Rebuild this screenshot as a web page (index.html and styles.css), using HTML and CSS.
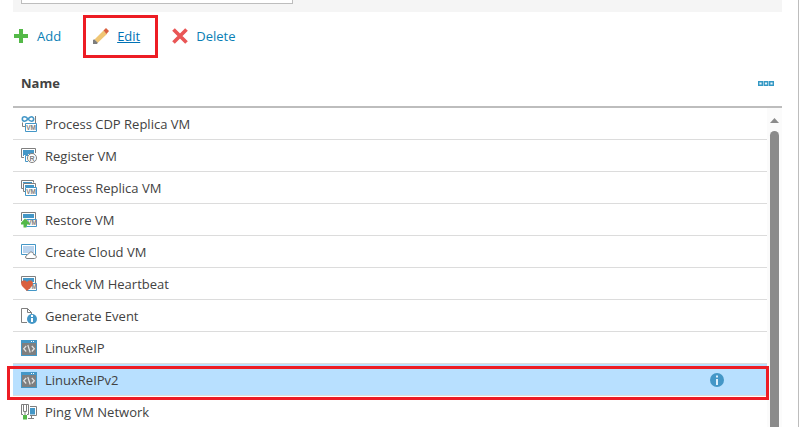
FILE: index.html
```html
<!DOCTYPE html>
<html lang="en">
<head>
<meta charset="utf-8">
<title>Plan Steps</title>
<link rel="stylesheet" href="styles.css">
</head>
<body>
<div class="page">
  <div class="filter"><div class="search"></div></div>
  <div class="toolbar">
    <a class="tool add"><svg width="14" height="14" viewBox="0 0 14 14"><path fill="#54b948" d="M5 0h4v5h5v4H9v5H5V9H0V5h5z"/></svg><span>Add</span></a>
    <a class="tool edit"><svg width="16" height="16" viewBox="0 0 16 16"><path fill="#f0c674" d="M1.500 11.500l9-9 3.500 3.500L4.500 15z"/><path fill="#d9603f" d="M10.500 2.500L13 0l3 3-2.500 3z"/><path fill="#7d7d7d" d="M0 16v-4l1.200-.8 3.600 3.600-.8 1.200z"/></svg><span>Edit</span></a>
    <a class="tool delete"><svg width="16" height="16" viewBox="0 0 16 16"><path d="M1.500 1.500l13 13M14.500 1.500l-13 13" stroke="#e95656" stroke-width="3.700"/></svg><span>Delete</span></a>
  </div>
  <div class="head"><span>Name</span><svg width="16" height="5" viewBox="0 0 16 5" fill="#e8f5fa" stroke="#3498c4" stroke-width="1.400"><path d="M.7.7h3.600v3.600H.7zM6.200.7h3.600v3.600H6.200zM11.700.7h3.600v3.600h-3.600z"/></svg></div>
  <div class="body">
    <div class="rows">
      <div class="row">
        <svg class="ico" viewBox="0 0 16 16" fill="none"><path d="M1.500 6.500v4H4M14.500 0v7" stroke="#7f7f7f"/><path d="M7 3C5.500 1.200 4.700.8 3.500.8a2.200 2.200 0 0 0 0 4.400C5 5.200 6 4 7 3s2-2.200 3.500-2.200a2.200 2.200 0 0 1 0 4.400C9 5.200 8 4.200 7 3z" stroke="#4497c7" stroke-width="1.600"/><path d="M4.500 7.500h11v8h-11z" fill="#fff" stroke="#4497c7"/><text x="10" y="14" class="vm">VM</text></svg>
        <span>Process CDP Replica VM</span></div>
      <div class="row">
        <svg class="ico" viewBox="0 0 16 16" fill="none"><path d="M3 9.500H.5v-9h14V5" stroke="#7f7f7f"/><path d="M2 2h11v4H7v1H3v1H2z" fill="#4497c7"/><path d="M7 13.500H4.500v-6H8" stroke="#4497c7"/><circle cx="11" cy="10" r="4.500" fill="#fff" stroke="#7f7f7f"/><text x="11" y="12.600" class="reg">R</text></svg>
        <span>Register VM</span></div>
      <div class="row">
        <svg class="ico" viewBox="0 0 16 16" fill="none"><path d="M2.500 8.500h-2v-8h12v2M4.500 11.500h-2v-8h12v4" stroke="#7f7f7f"/><path d="M2 2h9v1H2zM4 5h9v2H4z" fill="#4497c7"/><path d="M4.500 7.500h11v8h-11z" fill="#fff" stroke="#4497c7"/><text x="10" y="14" class="vm">VM</text></svg>
        <span>Process Replica VM</span></div>
      <div class="row">
        <svg class="ico" viewBox="0 0 16 16" fill="none"><path d="M.5 9V.5h14V7" stroke="#7f7f7f"/><path d="M2 2h11v4H2z" fill="#4497c7"/><path d="M5.500 7.500h10v7h-10z" fill="#fff" stroke="#4497c7"/><text x="11" y="13.200" class="vm">VM</text><path d="M4 6.500L8.500 11v1.500H5.500V15.500h-3v-3H-.2V11z" fill="#54b948"/></svg>
        <span>Restore VM</span></div>
      <div class="row">
        <svg class="ico" viewBox="0 0 16 16" fill="none"><path d="M.5.5h14v10H.5z" fill="#fff" stroke="#4497c7"/><path d="M2 2h11v7H2z" fill="#b9d3ee"/><path d="M6 14.500c-2 0-2-2.700-.1-3 .1-1.200 1-1.600 1.800-1.500.8-3 4.600-2.600 5 .7 3.300-.1 3.300 3.800.8 3.800z" fill="#fff" stroke="#7f7f7f"/></svg>
        <span>Create Cloud VM</span></div>
      <div class="row">
        <svg class="ico" viewBox="0 0 16 16" fill="none"><path d="M.5 7V.5h14V8" stroke="#7f7f7f"/><path d="M2 2h11v4H2z" fill="#4497c7"/><path d="M5.500 7.500h10v7h-10z" fill="#fff" stroke="#4497c7"/><text x="11" y="13.200" class="vm">VM</text><path d="M6 15L1 10C-.5 8-.2 4.800 2.500 4.500 4.400 4.300 5.500 5 6 6c.7-1 1.800-1.700 3.600-1.500 2.600.4 2.900 3.500 1.400 5.500z" fill="#d9603f"/></svg>
        <span>Check VM Heartbeat</span></div>
      <div class="row">
        <svg class="ico" viewBox="0 0 16 16" fill="none"><path d="M6 14.500H.5V.5h6l4 4V6M6.500.5v4h4" stroke="#7f7f7f"/><circle cx="11" cy="11" r="5" fill="#4497c7"/><path d="M10 7h2v2h-2zM10 10h2v4h-2z" fill="#fff"/></svg>
        <span>Generate Event</span></div>
      <div class="row">
        <svg class="ico" viewBox="0 0 16 16" fill="none"><path d="M0 0h16v16H0z" fill="#4497c7"/><path d="M1 3h14v12H1z" fill="#7f7f7f"/><path d="M10 1h1v1h-1zM12 1h1v1h-1z" fill="#fff"/><path d="M5.200 6L2.700 8.700l2.500 2.800M10.800 6l2.500 2.700-2.500 2.800M6.800 5l2.400 7.500" stroke="#e4e4e4" stroke-width="1.200"/></svg>
        <span>LinuxReIP</span></div>
      <div class="row selected">
        <svg class="ico" viewBox="0 0 16 16" fill="none"><path d="M0 0h16v16H0z" fill="#4497c7"/><path d="M1 3h14v12H1z" fill="#7f7f7f"/><path d="M10 1h1v1h-1zM12 1h1v1h-1z" fill="#fff"/><path d="M5.200 6L2.700 8.700l2.500 2.800M10.800 6l2.500 2.700-2.500 2.800M6.800 5l2.400 7.500" stroke="#e4e4e4" stroke-width="1.200"/></svg>
        <span>LinuxReIPv2</span>
        <svg class="info" width="14" height="14" viewBox="0 0 14 14"><circle cx="7" cy="7" r="7" fill="#4497c7"/><path d="M6 2.500h2v2H6zM6 6h2v6H6z" fill="#dff0fc"/></svg></div>
      <div class="row">
        <svg class="ico" viewBox="0 0 16 16" fill="none"><path d="M2 10.500H.5V.5h7v10H6" stroke="#7f7f7f"/><path d="M2.500.5v7h3v-7" stroke="#7f7f7f"/><path d="M4 8v3" stroke="#7f7f7f"/><path d="M9 2.500h6.500v9H9M7 14.500h6M10.500 11.500v3" stroke="#7f7f7f"/><path d="M9 4h5v6.500H9z" fill="#4497c7"/><path d="M2 11h4v4.500H2z" fill="#54b948"/></svg>
        <span>Ping VM Network</span></div>
    </div>
    <div class="scroll"><svg class="arrow" width="9" height="5" viewBox="0 0 9 5"><path d="M0 5L4.500 0 9 5z" fill="#8b8b8b"/></svg><div class="thumb"></div></div>
  </div>
  <div class="mark mark-edit"></div>
  <div class="mark mark-row"></div>
</div>
</body>
</html>
```
FILE: styles.css
```css
* { box-sizing: border-box; }
body { margin: 0; background: #fff; overflow: hidden; }
.page {
  position: relative;
  width: 799px;
  height: 427px;
  padding: 0 16px 0 13px;
  border-right: 1px solid #bdbdbd;
  overflow: hidden;
  font: 13px/18px "Open Sans", sans-serif;
  color: #424242;
}
.filter { height: 12px; padding-left: 8px; background: #f5f5f5; }
.search { width: 272px; height: 4px; background: #fff; border: 1px solid #bdbdbd; border-top: 0; }
.toolbar { display: flex; height: 48px; padding-left: 1px; color: #0a7fb5; }
.tool { display: flex; align-items: center; height: 48px; }
.tool svg { display: block; }
.add span { margin-left: 9px; }
.edit { margin-left: 32px; }
.edit span { margin-left: 8px; text-decoration: underline; color: #0072b5; }
.delete { margin-left: 32px; }
.delete span { margin-left: 8px; }
.head {
  display: flex;
  align-items: center;
  justify-content: space-between;
  height: 48px;
  padding: 0 8px;
  border-bottom: 2px solid #bdbdbd;
  font-weight: 700;
}
.body { display: flex; height: 319px; overflow: hidden; }
.rows { width: 754px; }
.row {
  display: flex;
  align-items: center;
  height: 32px;
  padding: 1px 43px 0 8px;
  border-bottom: 1px solid #dcdcdc;
}
.row span { margin-left: 8px; }
.selected { background: #b8e0ff; }
.ico { display: block; flex: none; width: 16px; height: 16px; }
.info { margin-left: auto; }
.vm { font: 700 6.500px "Liberation Sans", sans-serif; text-anchor: middle; fill: #7f7f7f; }
.reg { font: 700 7px "Liberation Sans", sans-serif; text-anchor: middle; fill: #7f7f7f; }
.scroll { display: flex; flex-direction: column; align-items: center; width: 15px; background: #fbfbfb; }
.arrow { display: block; flex: none; margin-top: 10px; }
.thumb { width: 9px; height: 340px; flex: none; margin-top: 8px; border-radius: 4.500px; background: #8b8b8b; }
.mark { position: absolute; border: 3px solid #ed1c24; }
.mark-edit { left: 83px; top: 15px; width: 75px; height: 43px; }
.mark-row { left: 7px; top: 366px; width: 762px; height: 34px; }
```
